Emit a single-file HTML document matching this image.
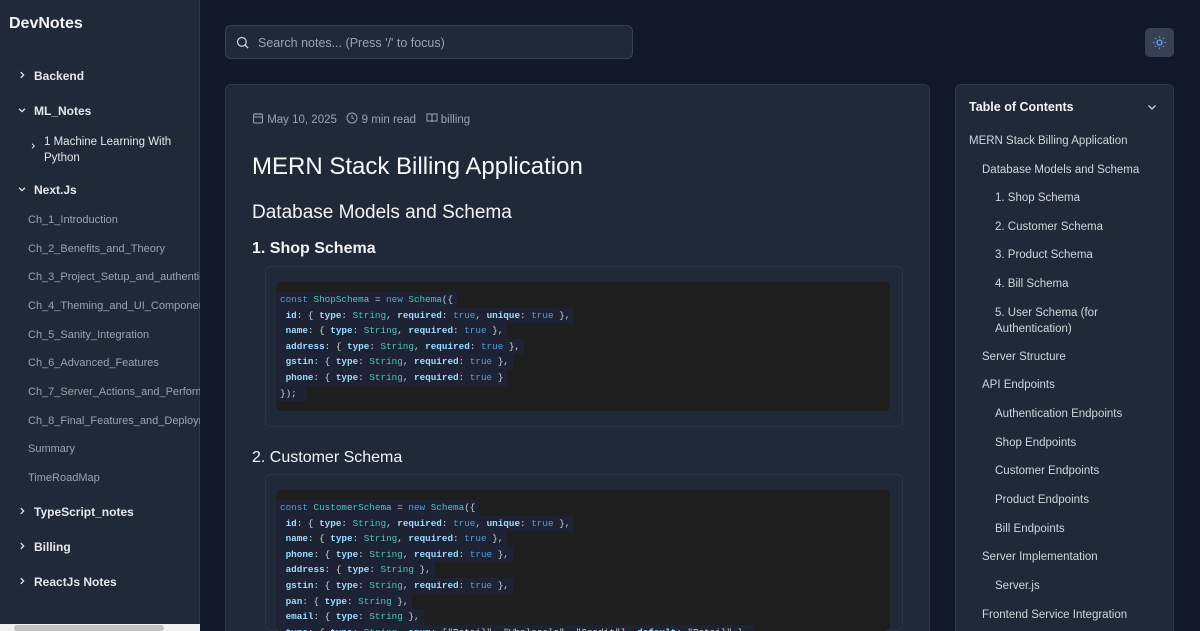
<!DOCTYPE html>
<html><head><meta charset="utf-8"><style>
*{box-sizing:border-box;margin:0;padding:0}
html{width:1200px;height:631px;overflow:hidden}
body{width:1200px;height:631px;overflow:hidden;background:#111827;font-family:"Liberation Sans",sans-serif;color:#e5e7eb;position:relative}
.sb{position:absolute;left:0;top:0;width:200px;height:631px;background:#1f2937;border-right:1px solid #2d3748}
.logo{position:absolute;left:9px;top:15px;font-size:16px;font-weight:bold;color:#f3f4f6}
.si{position:absolute;font-size:12px;color:#e5e7eb;font-weight:bold;left:34px}
.ch{position:absolute;left:17px}
.sub{position:absolute;left:28px;font-size:11px;color:#9ca3af;white-space:nowrap;width:172px;overflow:hidden}
.scroll{position:absolute;left:0;top:624px;width:200px;height:7px;background:#f1f1f1}
.scroll div{position:absolute;left:14px;top:1px;width:150px;height:6px;background:#c1c1c1;border-radius:3px}
.search{position:absolute;left:225px;top:25px;width:408px;height:34px;background:#1f2937;border:1px solid #374151;border-radius:6px;font-size:12.5px;color:#9ca3af;padding:10px 0 0 32px}
.theme{position:absolute;left:1145px;top:28px;width:29px;height:29px;background:#374151;border-radius:5px}
.card{position:absolute;left:225px;top:84px;width:705px;height:560px;background:#1f2937;border:1px solid #2d3748;border-radius:6px}
.meta{position:absolute;left:252px;top:112px;font-size:11.5px;color:#9ca3af}
h1{position:absolute;left:252px;top:153px;font-size:24px;font-weight:normal;color:#f9fafb}
h2{position:absolute;left:252px;top:202px;font-size:19px;font-weight:normal;color:#f3f4f6}
h3{position:absolute;left:252px;font-size:16px;font-weight:bold;color:#f3f4f6}
.cw{position:absolute;left:265px;width:638px;background:#1f2937;border:1px solid #2a3444;border-radius:6px}
.code{position:absolute;left:276px;width:614px;background:#1e1e1e;border-radius:5px;padding:10px 0 0 0;overflow:hidden}
.code div{font-family:"Liberation Mono",monospace;font-size:9.3px;line-height:15.6px;height:15.6px;color:#d4d4d4;background:#1e2235;display:inline-block;padding:0 4px;white-space:pre}
.code .l{display:block;background:none;padding:0}
.k{color:#569cd6}.t{color:#4ec9b0}.b{color:#569cd6}.p{color:#9cdcfe;font-weight:bold}
.toc{position:absolute;left:955px;top:84px;width:219px;height:560px;background:#1f2937;border:1px solid #2d3748;border-radius:6px}
.tt{position:absolute;left:969px;top:100px;font-size:12.5px;font-weight:bold;color:#f3f4f6}
.ti{position:absolute;font-size:11.5px;color:#d1d5db;line-height:16px}
</style></head><body>
<div class="sb">
<div class="logo">DevNotes</div>
<svg class="ch" style="top:70px" width="10" height="10" viewBox="0 0 24 24" fill="none" stroke="#e5e7eb" stroke-width="3"><path d="M9 5l7 7-7 7"/></svg><div class="si" style="top:69px">Backend</div>
<svg class="ch" style="top:105px" width="10" height="10" viewBox="0 0 24 24" fill="none" stroke="#e5e7eb" stroke-width="3"><path d="M5 9l7 7 7-7"/></svg><div class="si" style="top:104px">ML_Notes</div>
<svg class="ch" style="left:29px;top:142px" width="8" height="8" viewBox="0 0 24 24" fill="none" stroke="#e5e7eb" stroke-width="3"><path d="M9 5l7 7-7 7"/></svg><div class="si" style="left:44px;top:134px;font-weight:normal;font-size:11.5px;line-height:16px">1 Machine Learning With<br>Python</div>
<svg class="ch" style="top:184px" width="10" height="10" viewBox="0 0 24 24" fill="none" stroke="#e5e7eb" stroke-width="3"><path d="M5 9l7 7 7-7"/></svg><div class="si" style="top:183px">Next.Js</div>
<div class="sub" style="top:214px">Ch_1_Introduction</div>
<div class="sub" style="top:243px">Ch_2_Benefits_and_Theory</div>
<div class="sub" style="top:271px">Ch_3_Project_Setup_and_authentication</div>
<div class="sub" style="top:300px">Ch_4_Theming_and_UI_Components</div>
<div class="sub" style="top:329px">Ch_5_Sanity_Integration</div>
<div class="sub" style="top:357px">Ch_6_Advanced_Features</div>
<div class="sub" style="top:386px">Ch_7_Server_Actions_and_Performance</div>
<div class="sub" style="top:415px">Ch_8_Final_Features_and_Deployment</div>
<div class="sub" style="top:443px">Summary</div>
<div class="sub" style="top:472px">TimeRoadMap</div>
<svg class="ch" style="top:506px" width="10" height="10" viewBox="0 0 24 24" fill="none" stroke="#e5e7eb" stroke-width="3"><path d="M9 5l7 7-7 7"/></svg><div class="si" style="top:505px">TypeScript_notes</div>
<svg class="ch" style="top:541px" width="10" height="10" viewBox="0 0 24 24" fill="none" stroke="#e5e7eb" stroke-width="3"><path d="M9 5l7 7-7 7"/></svg><div class="si" style="top:540px">Billing</div>
<svg class="ch" style="top:576px" width="10" height="10" viewBox="0 0 24 24" fill="none" stroke="#e5e7eb" stroke-width="3"><path d="M9 5l7 7-7 7"/></svg><div class="si" style="top:575px">ReactJs Notes</div>
<div class="scroll"><div></div></div>
</div>
<div class="search">Search notes... (Press '/' to focus)</div>
<svg style="position:absolute;left:235px;top:35px" width="15" height="15" viewBox="0 0 24 24" fill="none" stroke="#d1d5db" stroke-width="2"><circle cx="11" cy="11" r="7"/><path d="M21 21l-5-5"/></svg>
<div class="theme"><svg style="position:absolute;left:7px;top:7px" width="15" height="15" viewBox="0 0 24 24" fill="none" stroke="#60a5fa" stroke-width="2"><circle cx="12" cy="12" r="4"/><path d="M12 2v2M12 20v2M4.9 4.9l1.4 1.4M17.7 17.7l1.4 1.4M2 12h2M20 12h2M4.9 19.1l1.4-1.4M17.7 6.3l1.4-1.4"/></svg></div>
<div class="card"></div>
<div class="meta"><svg width="12" height="12" viewBox="0 0 24 24" fill="none" stroke="#9ca3af" stroke-width="2" style="vertical-align:-1px"><rect x="3" y="4" width="18" height="18" rx="2"/><path d="M16 2v4M8 2v4M3 10h18"/></svg> May 10, 2025 &nbsp;&nbsp;<svg width="12" height="12" viewBox="0 0 24 24" fill="none" stroke="#9ca3af" stroke-width="2" style="vertical-align:-1px"><circle cx="12" cy="12" r="10"/><path d="M12 6v6l4 2"/></svg> 9 min read &nbsp;&nbsp;<svg width="12" height="12" viewBox="0 0 24 24" fill="none" stroke="#9ca3af" stroke-width="2" style="vertical-align:-1px"><path d="M2 4h7a3 3 0 0 1 3 3v13a2 2 0 0 0-2-2H2zM22 4h-7a3 3 0 0 0-3 3v13a2 2 0 0 1 2-2h8z"/></svg> billing</div>
<h1>MERN Stack Billing Application</h1>
<h2>Database Models and Schema</h2>
<h3 style="top:240px">1. Shop Schema</h3>
<div class="cw" style="top:266px;height:161px"></div>
<div class="code" style="top:282px;height:129px">
<div class="l"><div><span class="k">const</span> <span class="t">ShopSchema</span> = <span class="k">new</span> <span class="t">Schema</span>({</div></div>
<div class="l"><div> <span class="p">id</span>: { <span class="p">type</span>: <span class="t">String</span>, <span class="p">required</span>: <span class="b">true</span>, <span class="p">unique</span>: <span class="b">true</span> },</div></div>
<div class="l"><div> <span class="p">name</span>: { <span class="p">type</span>: <span class="t">String</span>, <span class="p">required</span>: <span class="b">true</span> },</div></div>
<div class="l"><div> <span class="p">address</span>: { <span class="p">type</span>: <span class="t">String</span>, <span class="p">required</span>: <span class="b">true</span> },</div></div>
<div class="l"><div> <span class="p">gstin</span>: { <span class="p">type</span>: <span class="t">String</span>, <span class="p">required</span>: <span class="b">true</span> },</div></div>
<div class="l"><div> <span class="p">phone</span>: { <span class="p">type</span>: <span class="t">String</span>, <span class="p">required</span>: <span class="b">true</span> }</div></div>
<div class="l"><div>}); </div></div>
</div>
<h3 style="top:449px;font-weight:normal">2. Customer Schema</h3>
<div class="cw" style="top:474px;height:157px"></div>
<div class="code" style="top:490px;height:141px">
<div class="l"><div><span class="k">const</span> <span class="t">CustomerSchema</span> = <span class="k">new</span> <span class="t">Schema</span>({</div></div>
<div class="l"><div> <span class="p">id</span>: { <span class="p">type</span>: <span class="t">String</span>, <span class="p">required</span>: <span class="b">true</span>, <span class="p">unique</span>: <span class="b">true</span> },</div></div>
<div class="l"><div> <span class="p">name</span>: { <span class="p">type</span>: <span class="t">String</span>, <span class="p">required</span>: <span class="b">true</span> },</div></div>
<div class="l"><div> <span class="p">phone</span>: { <span class="p">type</span>: <span class="t">String</span>, <span class="p">required</span>: <span class="b">true</span> },</div></div>
<div class="l"><div> <span class="p">address</span>: { <span class="p">type</span>: <span class="t">String</span> },</div></div>
<div class="l"><div> <span class="p">gstin</span>: { <span class="p">type</span>: <span class="t">String</span>, <span class="p">required</span>: <span class="b">true</span> },</div></div>
<div class="l"><div> <span class="p">pan</span>: { <span class="p">type</span>: <span class="t">String</span> },</div></div>
<div class="l"><div> <span class="p">email</span>: { <span class="p">type</span>: <span class="t">String</span> },</div></div>
<div class="l"><div> <span class="p">type</span>: { <span class="p">type</span>: <span class="t">String</span>, <span class="p">enum</span>: ["Retail", "Wholesale", "Credit"], <span class="p">default</span>: "Retail" },</div></div>
</div>
<div class="toc"></div>
<div class="tt">Table of Contents</div>
<svg style="position:absolute;left:1146px;top:101px" width="12" height="12" viewBox="0 0 24 24" fill="none" stroke="#d1d5db" stroke-width="2.5"><path d="M5 9l7 7 7-7"/></svg>
<div class="ti" style="left:969px;top:133px">MERN Stack Billing Application</div>
<div class="ti" style="left:982px;top:162px">Database Models and Schema</div>
<div class="ti" style="left:995px;top:190px">1. Shop Schema</div>
<div class="ti" style="left:995px;top:219px">2. Customer Schema</div>
<div class="ti" style="left:995px;top:247px">3. Product Schema</div>
<div class="ti" style="left:995px;top:276px">4. Bill Schema</div>
<div class="ti" style="left:995px;top:305px">5. User Schema (for<br>Authentication)</div>
<div class="ti" style="left:982px;top:349px">Server Structure</div>
<div class="ti" style="left:982px;top:377px">API Endpoints</div>
<div class="ti" style="left:995px;top:406px">Authentication Endpoints</div>
<div class="ti" style="left:995px;top:435px">Shop Endpoints</div>
<div class="ti" style="left:995px;top:463px">Customer Endpoints</div>
<div class="ti" style="left:995px;top:492px">Product Endpoints</div>
<div class="ti" style="left:995px;top:521px">Bill Endpoints</div>
<div class="ti" style="left:982px;top:549px">Server Implementation</div>
<div class="ti" style="left:995px;top:578px">Server.js</div>
<div class="ti" style="left:982px;top:607px">Frontend Service Integration</div>
</body></html>
